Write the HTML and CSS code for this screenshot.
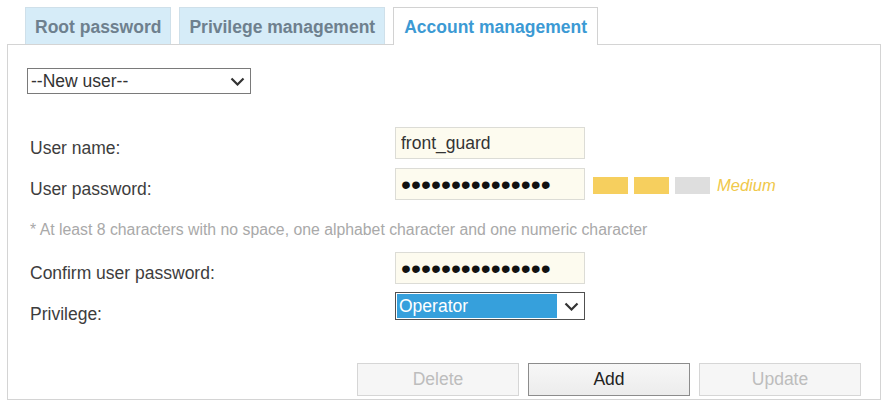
FILE: index.html
```html
<!DOCTYPE html>
<html lang="en">
<head>
<meta charset="utf-8">
<title>Account management</title>
<link rel="stylesheet" href="styles.css">
</head>
<body>
<div class="tabs">
  <div class="tab">Root password</div>
  <div class="tab">Privilege management</div>
  <div class="tab active">Account management</div>
</div>
<div class="panel">
  <div class="select user-select">
    <span class="select-text">--New user--</span>
    <svg class="chev" width="15" height="9" viewBox="0 0 15 9"><path d="M1.5 1.5 L7.5 7.5 L13.5 1.5" fill="none" stroke="#333" stroke-width="2.2"/></svg>
  </div>
  <div class="form">
    <div class="row">
      <label class="label">User name:</label>
      <input class="field" type="text" value="front_guard">
    </div>
    <div class="row row-pw">
      <label class="label">User password:</label>
      <input class="field pw" type="password" value="abcdefgh1234567">
      <div class="strength">
        <span class="bar on"></span>
        <span class="bar on"></span>
        <span class="bar"></span>
        <span class="level">Medium</span>
      </div>
    </div>
    <p class="hint">* At least 8 characters with no space, one alphabet character and one numeric character</p>
    <div class="row">
      <label class="label">Confirm user password:</label>
      <input class="field pw" type="password" value="abcdefgh1234567">
    </div>
    <div class="row row-priv">
      <label class="label">Privilege:</label>
      <div class="select priv-select">
        <span class="select-text selected">Operator</span>
        <svg class="chev" width="15" height="9" viewBox="0 0 15 9"><path d="M1.5 1.5 L7.5 7.5 L13.5 1.5" fill="none" stroke="#333" stroke-width="2.2"/></svg>
      </div>
    </div>
  </div>
  <div class="actions">
    <button class="btn" disabled>Delete</button>
    <button class="btn primary">Add</button>
    <button class="btn" disabled>Update</button>
  </div>
</div>
</body>
</html>
```
FILE: styles.css
```css
* { box-sizing: border-box; }
body {
  margin: 0;
  background: #fff;
  font-family: "Liberation Sans", Arial, sans-serif;
  font-size: 17.5px;
  color: #3a3a3a;
}
.tabs {
  display: flex;
  align-items: flex-end;
  gap: 8px;
  margin: 7px 0 0 25px;
  height: 37px;
}
.tab {
  height: 37px;
  padding: 0 9px;
  display: flex;
  align-items: center;
  padding-top: 2px;
  background: #d6ecf8;
  border: 1px solid #cfe0ea;
  border-bottom: none;
  font-weight: bold;
  color: #6e808e;
  white-space: nowrap;
}
.tab.active {
  height: 38px;
  margin-bottom: -1px;
  background: #fff;
  border-color: #d2d2d2;
  color: #3c9ad4;
  position: relative;
  z-index: 1;
  padding: 1px 10px 0;
}
.panel {
  margin-left: 7px;
  width: 874px;
  border: 1px solid #d4d4d4;
  padding: 23px 19px 3px 19px;
}
.select {
  display: flex;
  align-items: center;
  background: #fff;
}
.user-select {
  width: 224px;
  height: 26px;
  border: 1px solid #7a7a7a;
  padding: 0 5px 0 3px;
}
.select-text { flex: 1; white-space: nowrap; color: #333; }
.chev { flex: none; }
.form { margin-top: 33px; }
.row {
  display: flex;
  align-items: flex-start;
}
.row + .row { margin-top: 9px; }
.row.row-priv { margin-top: 8px; height: 28px; }
.label {
  flex: 0 0 368px;
  padding: 11px 0 0 3px;
  line-height: 20px;
  color: #3d3d3d;
}
.row-priv .label { padding-top: 12px; }
.field {
  width: 190px;
  height: 32px;
  border: 1px solid #dcdcd6;
  background: #fdfbef;
  padding: 0 5px;
  font-family: "Liberation Sans", Arial, sans-serif;
  font-size: 17.5px;
  color: #333;
  outline: none;
}
.field.pw {
  font-size: 28.5px;
  padding: 0 4px 0 5px;
  color: #111;
}
.strength {
  align-self: center;
  display: flex;
  align-items: center;
  gap: 6px;
  margin-left: 8px;
  margin-top: 2px;
}
.bar {
  width: 35px;
  height: 17px;
  background: #dedede;
}
.bar.on { background: #f6cf5e; }
.level {
  margin-left: 1px;
  font-style: italic;
  font-size: 16.5px;
  color: #f0c84a;
}
.hint {
  margin: 20px 0 12px 3px;
  line-height: 20px;
  font-size: 15.8px;
  color: #a9a9a9;
}
.priv-select {
  width: 190px;
  height: 28px;
  border: 1px solid #505050;
  padding: 1px 5px 1px 1px;
}
.selected {
  align-self: stretch;
  display: flex;
  align-items: center;
  background: #36a0dc;
  color: #fff;
  padding-left: 2px;
  margin-right: 7px;
}
.actions {
  display: flex;
  justify-content: flex-end;
  gap: 9px;
  margin-top: 43px;
}
.btn {
  width: 162px;
  height: 33px;
  font-family: "Liberation Sans", Arial, sans-serif;
  font-size: 17.5px;
  border: 1px solid #d6d6d6;
  background: #f6f6f6;
  color: #bdbdbd;
  padding: 0;
}
.btn.primary {
  border-color: #8c8c8c;
  background: linear-gradient(#f7f7f7, #ececec);
  color: #222;
}
```
